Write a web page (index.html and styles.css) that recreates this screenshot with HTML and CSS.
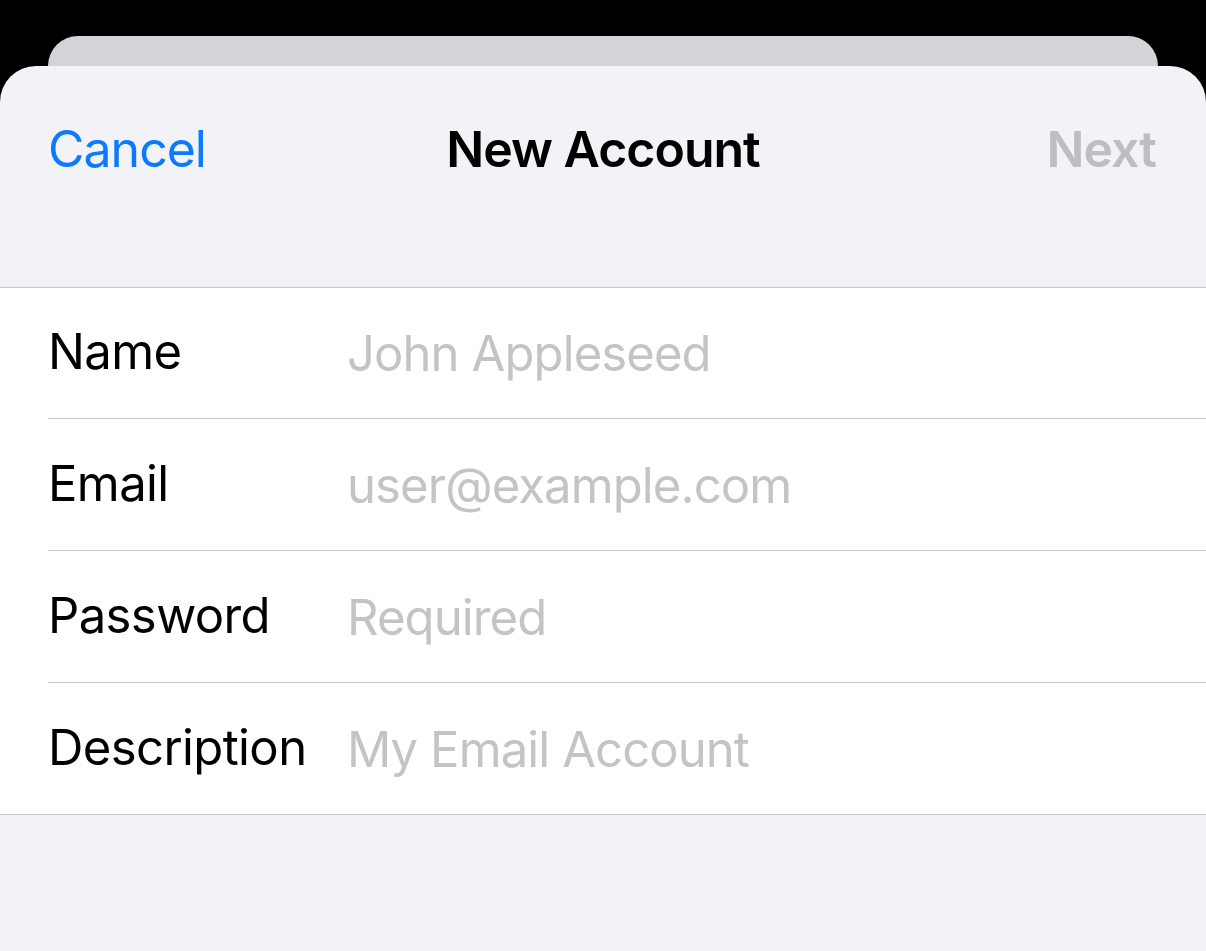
FILE: index.html
```html
<!DOCTYPE html>
<html lang="en">
<head>
<meta charset="utf-8">
<title>New Account</title>
<link rel="stylesheet" href="styles.css">
</head>
<body>
<div class="screen">
  <div class="back-card"></div>
  <div class="sheet">
    <div class="nav">
      <span class="nav-btn cancel">Cancel</span>
      <span class="nav-title">New Account</span>
      <span class="nav-btn next">Next</span>
    </div>
    <div class="form">
      <div class="row"><span class="label">Name</span><span class="placeholder">John Appleseed</span></div>
      <div class="row"><span class="label">Email</span><span class="placeholder">user@example.com</span></div>
      <div class="row"><span class="label">Password</span><span class="placeholder">Required</span></div>
      <div class="row"><span class="label">Description</span><span class="placeholder">My Email Account</span></div>
    </div>
  </div>
</div>
</body>
</html>
```
FILE: styles.css
```css
html, body {
  margin: 0;
  padding: 0;
  background: #000;
}
body {
  width: 1206px;
  height: 951px;
  overflow: hidden;
  font-family: Inter, "Liberation Sans", sans-serif;
}
.screen {
  padding-top: 36px;
  display: flex;
  flex-direction: column;
  height: 915px;
}
.back-card {
  margin: 0 48px;
  height: 30px;
  background: #d4d4d8;
  border-radius: 30px 30px 0 0;
}
.sheet {
  flex: 1;
  background: #f2f2f7;
  border-radius: 36px 36px 0 0;
}
.nav {
  height: 166px;
  display: flex;
  align-items: center;
  justify-content: space-between;
  padding: 0 50px 0 48px;
  position: relative;
}
.nav-btn {
  font-size: 50px;
  letter-spacing: -1px;
}
.cancel { color: #0a7aff; }
.next { color: #bdbdc2; font-weight: 600; }
.nav-title {
  position: absolute;
  left: 0;
  right: 0;
  text-align: center;
  font-size: 50px;
  font-weight: 600;
  color: #000;
  letter-spacing: -1px;
}
.form {
  margin-top: 55px;
  background: #fff;
  border-top: 1px solid #c8c7cc;
  border-bottom: 1px solid #c8c7cc;
}
.row {
  height: 131px;
  margin-left: 48px;
  display: flex;
  align-items: center;
  border-bottom: 1px solid #c8c7cc;
  font-size: 49px;
  letter-spacing: -0.6px;
}
.row:first-child {
  height: 130px;
}
.row:last-child {
  border-bottom: none;
  height: 131px;
}
.label {
  width: 299px;
  flex: none;
  color: #000;
  padding-bottom: 3px;
}
.placeholder {
  color: #c4c4c7;
  letter-spacing: -0.9px;
  padding-top: 1px;
}
```
